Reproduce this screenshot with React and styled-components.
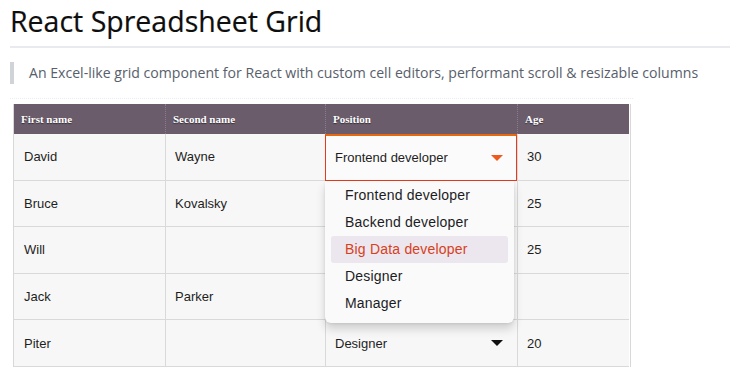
import styled, { createGlobalStyle } from "styled-components";

const GlobalStyle = createGlobalStyle`
  body {
    margin: 0;
    background: #ffffff;
    font-family: "Open Sans", "Noto Sans", sans-serif;
  }
`;

const Page = styled.div`
  padding: 0 0 0 10px;
`;

const Title = styled.h1`
  margin: 0;
  padding-top: 1px;
  font-size: 28.5px;
  font-weight: 400;
  line-height: 40px;
  color: #0e0e0e;
  -webkit-text-stroke: 0.2px #0e0e0e;
  border-bottom: 2px solid #e8eaed;
  padding-bottom: 5px;
`;

const Quote = styled.blockquote`
  margin: 14px 0 0;
  padding: 0 0 0 15px;
  border-left: 4px solid #d0d4d9;
  font-size: 14.1px;
  line-height: 22px;
  color: #58606b;
  white-space: nowrap;
`;

const Frame = styled.div`
  margin-top: 14px;
  width: 620px;
  padding: 5px 0 0 3px;
  border-top: 1px dotted #ececec;
`;

const Grid = styled.div`
  display: grid;
  grid-template-columns: 151px 160px 192px 112px;
  width: 616px;
  border-left: 1px solid #d8d8d8;
  border-right: 1px solid #d8d8d8;
  font-family: "Liberation Sans", Arial, sans-serif;
`;

const Head = styled.div`
  height: 30px;
  display: flex;
  align-items: center;
  padding-left: 7px;
  background: #6b5c6c;
  color: #fff;
  font-family: "Liberation Serif", "Times New Roman", serif;
  font-weight: 700;
  font-size: 11px;
  text-shadow: 0 1px 1px rgba(0, 0, 0, 0.5);
  border-left: ${(p) => (p.$first ? "none" : "1px dotted #8a7d8a")};
`;

const Cell = styled.div`
  position: relative;
  height: 46.6px;
  box-sizing: border-box;
  display: flex;
  align-items: center;
  padding-left: ${(p) => (p.$first ? "10px" : "9px")};
  background: #f7f7f7;
  border-bottom: 1px solid #d9d9d9;
  border-left: ${(p) => (p.$first ? "none" : "1px solid #d9d9d9")};
  font-size: 13px;
  color: #1e1e1e;
`;

const Selected = styled(Cell)`
  border: 1px solid #e8391e;
  border-top: 2px solid #e8680f;
  background: #fbfbfb;
  z-index: 1;
`;

const Arrow = styled.span`
  position: absolute;
  right: ${(p) => (p.$open ? "13px" : "14px")};
  top: 50%;
  margin-top: -3px;
  width: 0;
  height: 0;
  border-left: 6px solid transparent;
  border-right: 6px solid transparent;
  border-top: 6px solid ${(p) => (p.$open ? "#ee5a1c" : "#111")};
`;

const Menu = styled.div`
  position: absolute;
  top: 100%;
  left: -1px;
  width: 189px;
  padding: 1px 6px 6px;
  box-sizing: border-box;
  background: #fafafa;
  border-radius: 0 0 6px 6px;
  box-shadow: 0 6px 10px rgba(0, 0, 0, 0.16), 0 1px 3px rgba(0, 0, 0, 0.08);
  margin-top: 1px;
`;

const Option = styled.div`
  height: 27px;
  display: flex;
  align-items: center;
  padding-left: 14px;
  border-radius: 3px;
  font-size: 14px;
  letter-spacing: 0.2px;
  color: ${(p) => (p.$active ? "#d8401a" : "#1c1c24")};
  background: ${(p) => (p.$active ? "#ece6ef" : "transparent")};
`;

const rows = [
  ["David", "Wayne", "Frontend developer", "30"],
  ["Bruce", "Kovalsky", "", "25"],
  ["Will", "", "", "25"],
  ["Jack", "Parker", "", ""],
  ["Piter", "", "Designer", "20"],
];

const options = [
  "Frontend developer",
  "Backend developer",
  "Big Data developer",
  "Designer",
  "Manager",
];

export default function App() {
  return (
    <Page>
      <GlobalStyle />
      <Title>React Spreadsheet Grid</Title>
      <Quote>
        An Excel-like grid component for React with custom cell editors,
        performant scroll &amp; resizable columns
      </Quote>
      <Frame>
        <Grid>
          <Head $first>First name</Head>
          <Head>Second name</Head>
          <Head>Position</Head>
          <Head>Age</Head>
          {rows.map((r, i) => [
            <Cell $first key={`a${i}`}>{r[0]}</Cell>,
            <Cell key={`b${i}`}>{r[1]}</Cell>,
            i === 0 ? (
              <Selected key={`c${i}`}>
                {r[2]}
                <Arrow $open />
                <Menu>
                  {options.map((o) => (
                    <Option key={o} $active={o === "Big Data developer"}>
                      {o}
                    </Option>
                  ))}
                </Menu>
              </Selected>
            ) : (
              <Cell key={`c${i}`}>
                {r[2]}
                {r[2] && <Arrow />}
              </Cell>
            ),
            <Cell key={`d${i}`}>{r[3]}</Cell>,
          ])}
        </Grid>
      </Frame>
    </Page>
  );
}
